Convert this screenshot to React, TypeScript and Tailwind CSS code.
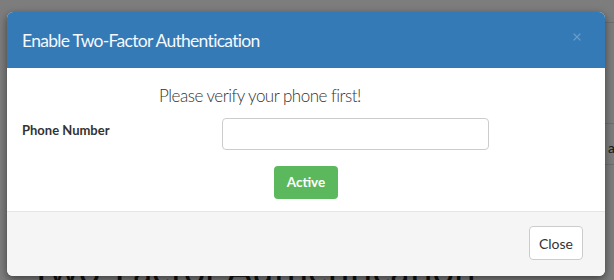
import { X } from "lucide-react";

const App = () => {
  return (
    <div className="relative w-[614px] h-[280px] overflow-hidden bg-[#fafafa] font-['Lato',sans-serif]">
      {/* page behind the dialog */}
      <div className="absolute inset-0">
        <div className="mt-[22px] ml-[560px] border-t border-[#ddd]" />
        <div className="mt-[100px] ml-[560px] border-t border-[#ddd]" />
        <div className="ml-[608px] mt-[14px] text-[14px] text-[#333] leading-[20px]">a</div>
        <div className="ml-[560px] mt-[6px] border-t border-[#ddd]" />
        <div className="ml-[30px] mt-[82px] text-[38px] leading-[44px] text-[#222] whitespace-nowrap">
          Two-Factor Authentication
        </div>
      </div>

      {/* backdrop + dialog */}
      <div className="absolute inset-0 bg-black/50 pt-[12px] pl-[7px]">
        <div className="w-[598px] h-[264px] rounded-[6px] overflow-hidden bg-white shadow-[0_3px_9px_rgba(0,0,0,0.5)] flex flex-col">
          <div className="h-[56px] bg-[#337ab7] px-[15px] flex items-center justify-between">
            <h4 className="text-[17.5px] tracking-[-0.7px] text-[#f5f8fc] pt-[2px]">
              Enable Two-Factor Authentication
            </h4>
            <X className="w-[12px] h-[12px] text-[#6c9bc9] mr-[7px] -mt-[6px]" strokeWidth={2.5} />
          </div>

          <div className="h-[143px] px-[15px] pt-[16px]">
            <div className="w-[476px] text-center text-[17px] tracking-[-0.5px] leading-[24px] text-[#333] font-light">
              Please verify your phone first!
            </div>
            <div className="flex mt-[10px]">
              <label className="w-[200px] pt-[3px] text-[13px] font-bold text-[#333]">
                Phone Number
              </label>
              <input
                type="text"
                className="w-[267px] h-[32px] border border-[#ccc] rounded-[4px] bg-white"
              />
            </div>
            <div className="flex justify-center mt-[16px]">
              <button className="h-[33px] px-[13px] rounded-[4px] bg-[#5cb85c] text-white text-[13.5px] font-bold">
                Active
              </button>
            </div>
          </div>

          <div className="flex-1 bg-[#f5f5f5] border-t border-[#e5e5e5] px-[22px] flex items-center justify-end pb-[2px]">
            <button className="h-[34px] px-[9px] rounded-[4px] border border-[#ccc] bg-white text-[14px] text-[#333]">
              Close
            </button>
          </div>
        </div>
      </div>
    </div>
  );
};

export default App;
